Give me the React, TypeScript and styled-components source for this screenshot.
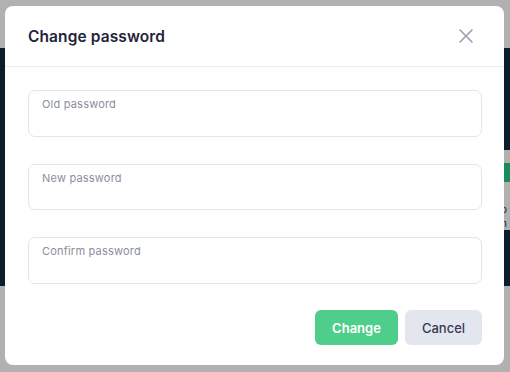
import React from "react"
import styled, { createGlobalStyle } from "styled-components"

const GlobalStyle = createGlobalStyle`
  html, body {
    margin: 0;
    padding: 0;
    width: 510px;
    height: 372px;
    overflow: hidden;
    font-family: Inter, "Noto Sans", sans-serif;
  }
`

const Page = styled.div`
  position: relative;
  width: 510px;
  height: 372px;
  display: flex;
  flex-direction: column;
  background: #b1b1b1;
`

const TopBar = styled.div`
  height: 48px;
  flex: none;
`

const DarkBand = styled.div`
  height: 238px;
  flex: none;
  background: #0d1c29;
  display: flex;
  justify-content: flex-end;
  align-items: flex-start;
  padding-top: 102px;
  box-sizing: border-box;
`

const SideCard = styled.div`
  width: 10px;
  height: 80px;
  background: #b1b1b1;
  display: flex;
  flex-direction: column;
  padding-top: 13px;
  box-sizing: border-box;
  overflow: hidden;
`

const SideStripe = styled.div`
  height: 19px;
  flex: none;
  background: #1b8a5e;
`

const SideText = styled.div`
  margin-top: 20px;
  font-size: 10px;
  line-height: 14px;
  color: #222;
  padding-left: 1px;
`

const Overlay = styled.div`
  position: absolute;
  inset: 0;
  display: flex;
  align-items: flex-start;
  padding: 6px 6px 0 5px;
  box-sizing: border-box;
`

const Dialog = styled.div`
  width: 499px;
  height: 359px;
  background: #ffffff;
  border-radius: 8px;
  display: flex;
  flex-direction: column;
`

const Header = styled.div`
  height: 61px;
  flex: none;
  box-sizing: border-box;
  border-bottom: 1px solid #ececf2;
  display: flex;
  align-items: center;
  justify-content: space-between;
  padding: 0 30px 0 23px;
`

const Title = styled.h2`
  margin: 0;
  font-size: 15.5px;
  font-weight: 600;
  color: #22253a;
  letter-spacing: 0.1px;
`

const CloseButton = styled.button`
  border: none;
  background: none;
  padding: 0;
  width: 16px;
  height: 16px;
  display: flex;
  cursor: pointer;
`

const Body = styled.div`
  padding: 23px 22px 0 23px;
  display: flex;
  flex-direction: column;
  gap: 27px;
`

const Field = styled.label`
  height: 46.5px;
  box-sizing: border-box;
  border: 1px solid #e4e3ef;
  border-radius: 7px;
  padding: 6px 13px;
  display: flex;
  flex-direction: column;
`

const FieldLabel = styled.span`
  font-size: 11px;
  letter-spacing: 0.2px;
  color: #8b8e9c;
  line-height: 14px;
`

const FieldInput = styled.input`
  border: none;
  outline: none;
  padding: 0;
  font-size: 13px;
  background: transparent;
`

const Footer = styled.div`
  margin-top: 26.5px;
  padding-right: 22px;
  display: flex;
  justify-content: flex-end;
  gap: 7px;
`

const Button = styled.button<{ primary?: boolean }>`
  height: 35px;
  border: none;
  border-radius: 6px;
  font-family: inherit;
  font-size: 13px;
  font-weight: ${(p) => (p.primary ? 600 : 500)};
  color: ${(p) => (p.primary ? "#ffffff" : "#343a54")};
  background: ${(p) => (p.primary ? "#4fce8b" : "#e3e5ef")};
  width: ${(p) => (p.primary ? "83px" : "77px")};
  cursor: pointer;
`

const fields = ["Old password", "New password", "Confirm password"]

export default function App() {
  return (
    <>
      <GlobalStyle />
      <Page>
        <TopBar />
        <DarkBand>
          <SideCard>
            <SideStripe />
            <SideText>
              o<br />n
            </SideText>
          </SideCard>
        </DarkBand>
        <Overlay>
          <Dialog>
            <Header>
              <Title>Change password</Title>
              <CloseButton aria-label="Close">
                <svg width="16" height="16" viewBox="0 0 16 16">
                  <path
                    d="M2 2L14 14M14 2L2 14"
                    stroke="#9b9db1"
                    strokeWidth="1.6"
                    strokeLinecap="round"
                  />
                </svg>
              </CloseButton>
            </Header>
            <Body>
              {fields.map((f) => (
                <Field key={f}>
                  <FieldLabel>{f}</FieldLabel>
                  <FieldInput type="password" />
                </Field>
              ))}
            </Body>
            <Footer>
              <Button primary>Change</Button>
              <Button>Cancel</Button>
            </Footer>
          </Dialog>
        </Overlay>
      </Page>
    </>
  )
}
